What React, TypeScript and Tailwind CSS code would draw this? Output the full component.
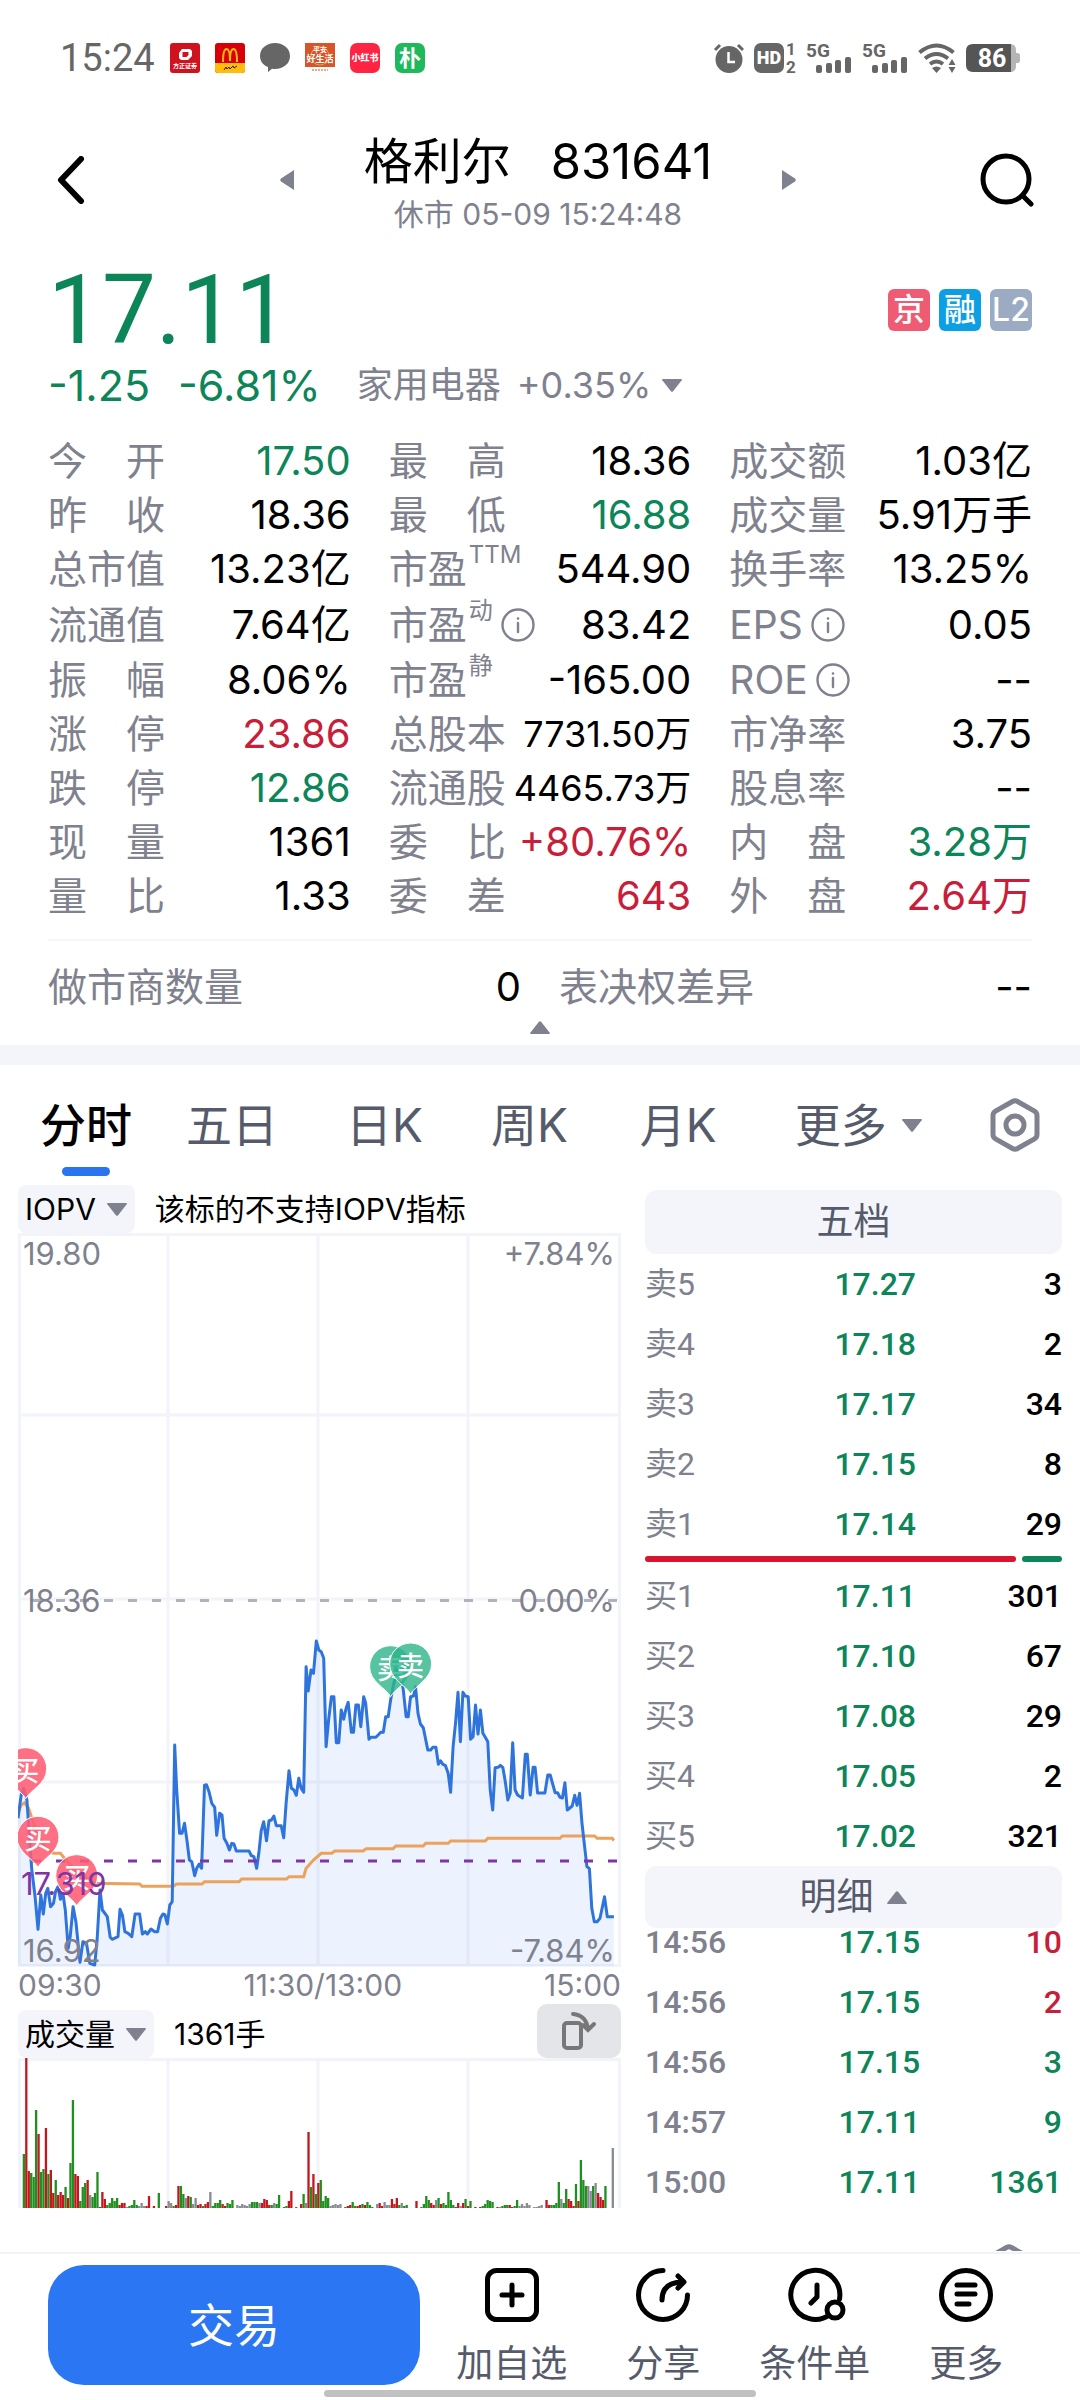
import React, { useState } from 'react';
import clsx from 'clsx';

type Tone = 'up' | 'down' | 'flat';

interface Stat {
  label: string;
  value: string;
  tone?: Tone;
  sup?: string;
  info?: boolean;
  small?: boolean;
}

const toneClass: Record<Tone, string> = {
  up: 'text-[#c81e3a]',
  down: 'text-[#0c8558]',
  flat: 'text-black',
};

const stats: Stat[] = [
  { label: '今　开', value: '17.50', tone: 'down' },
  { label: '最　高', value: '18.36' },
  { label: '成交额', value: '1.03亿' },
  { label: '昨　收', value: '18.36' },
  { label: '最　低', value: '16.88', tone: 'down' },
  { label: '成交量', value: '5.91万手' },
  { label: '总市值', value: '13.23亿' },
  { label: '市盈', sup: 'TTM', value: '544.90' },
  { label: '换手率', value: '13.25%' },
  { label: '流通值', value: '7.64亿' },
  { label: '市盈', sup: '动', info: true, value: '83.42' },
  { label: 'EPS', info: true, value: '0.05' },
  { label: '振　幅', value: '8.06%' },
  { label: '市盈', sup: '静', value: '-165.00' },
  { label: 'ROE', info: true, value: '--' },
  { label: '涨　停', value: '23.86', tone: 'up' },
  { label: '总股本', value: '7731.50万', small: true },
  { label: '市净率', value: '3.75' },
  { label: '跌　停', value: '12.86', tone: 'down' },
  { label: '流通股', value: '4465.73万', small: true },
  { label: '股息率', value: '--' },
  { label: '现　量', value: '1361' },
  { label: '委　比', value: '+80.76%', tone: 'up' },
  { label: '内　盘', value: '3.28万', tone: 'down' },
  { label: '量　比', value: '1.33' },
  { label: '委　差', value: '643', tone: 'up' },
  { label: '外　盘', value: '2.64万', tone: 'up' },
];

const tabs = [
  { name: '分时', gap: 'mr-[54px]' },
  { name: '五日', gap: 'mr-[68px]' },
  { name: '日K', gap: 'mr-[68px]' },
  { name: '周K', gap: 'mr-[72px]' },
  { name: '月K', gap: 'mr-[78px]' },
];

const asks = [
  ['卖5', '17.27', '3'],
  ['卖4', '17.18', '2'],
  ['卖3', '17.17', '34'],
  ['卖2', '17.15', '8'],
  ['卖1', '17.14', '29'],
];

const bids = [
  ['买1', '17.11', '301'],
  ['买2', '17.10', '67'],
  ['买3', '17.08', '29'],
  ['买4', '17.05', '2'],
  ['买5', '17.02', '321'],
];

const ticks: [string, string, string, Tone][] = [
  ['14:56', '17.15', '10', 'up'],
  ['14:56', '17.15', '2', 'up'],
  ['14:56', '17.15', '3', 'down'],
  ['14:57', '17.11', '9', 'down'],
  ['15:00', '17.11', '1361', 'down'],
];

// raw x,y samples of the price and average lines
const PRICE =
  '44,775 52,705 58,685 66,720 72,830 78,930 86,1010 93,1108 100,1005 106,1062 112,1000 117,985 124,1040 131,1030 136,995 142,980 148,1018 154,1000 160,1050 167,1165 172,1130 179,1040 186,1085 196,1207 203,1145 212,1150 220,1210 232,1215 238,1140 245,990 251,1050 263,1070 270,1132 275,1138 289,1130 294,1048 300,1065 306,1115 314,1120 323,1130 331,1062 342,1062 349,1122 356,1115 361,1122 370,1107 379,1115 386,1115 393,1075 399,1062 404,1064 410,1092 416,1035 422,1025 428,555 433,690 440,820 446,820 452,790 458,840 464,900 470,905 477,947 482,925 488,912 494,925 501,676 506,674 512,695 519,730 526,742 531,826 538,760 544,765 549,835 556,850 562,870 568,850 573,852 579,873 610,873 616,887 622,890 629,925 634,880 640,812 646,785 653,842 659,782 665,780 671,768 677,797 689,797 695,833 701,730 708,632 714,685 720,690 726,706 732,655 738,685 744,697 750,320 755,393 762,330 768,340 775,243 781,270 787,275 793,295 799,560 805,480 812,410 818,410 824,548 830,548 836,450 842,478 848,445 853,427 861,517 866,517 872,435 878,435 884,500 891,410 896,430 904,538 909,532 921,532 933,517 939,517 945,470 951,470 957,420 963,380 972,330 980,330 988,390 995,470 1000,470 1006,410 1013,408 1018,380 1024,460 1030,492 1037,503 1048,570 1055,570 1060,562 1068,562 1074,613 1079,602 1085,613 1091,616 1098,640 1104,697 1110,560 1116,490 1122,397 1128,545 1134,397 1140,408 1147,410 1153,538 1159,530 1165,435 1171,522 1177,450 1183,520 1189,532 1195,545 1201,690 1207,750 1213,623 1220,622 1226,616 1232,623 1238,665 1244,720 1250,700 1256,548 1262,690 1268,705 1280,714 1287,583 1292,583 1299,705 1306,622 1311,622 1317,699 1335,699 1342,645 1348,645 1354,672 1360,698 1366,698 1372,712 1378,714 1384,668 1390,750 1402,738 1408,706 1414,736 1420,700 1426,790 1438,920 1444,926 1450,1045 1456,1085 1463,1085 1470,1075 1481,1010 1488,1070 1504,1070';
const AVERAGE =
  '44,760 52,735 60,728 70,745 82,790 95,830 110,860 130,880 148,880 165,905 190,940 230,970 342,972 348,979 425,979 432,972 495,972 501,965 586,965 592,957 702,957 708,950 744,950 750,925 768,900 787,880 813,880 820,873 890,873 897,866 963,866 970,858 1037,858 1043,850 1098,850 1104,843 1189,843 1195,835 1372,835 1378,828 1457,828 1463,835 1500,835 1504,842';

// one bar per minute: r = up, g = down, k = unchanged
const VOLUME =
  'g54 r150 r37 g35 g31 g98 r74 g36 g39 r80 g34 r38 r15 g28 r13 r16 r13 g21 r10 g45 g108 r34 r32 g7 g21 g25 r28 k13 g11 g15 g36 r1 r16 r9 g3 g5 g10 g7 g10 r3 r5 r5 k1 g2 g3 g8 g3 k2 k5 k2 r2 r12 k0 r2 k0 g15 k0 k0 r2 k7 k5 g2 r3 r22 g22 g14 k10 r12 g11 k4 k10 r3 r4 g2 r4 r6 k16 g2 g5 g5 g8 r4 r2 g5 g4 g8 k0 k3 k2 k4 k3 k2 k4 g6 g6 g6 k5 r5 r9 r8 r3 g3 k5 g4 g13 k0 g1 g2 r7 r17 k0 g1 k0 r4 g14 k5 r76 g21 r34 g14 r25 g28 g7 g12 g10 k2 k3 k4 k3 k4 k0 g1 r2 r3 g6 g2 r2 r3 g4 r3 g6 g3 g1 k0 k4 r5 r2 k6 k3 k3 r9 r4 r10 g3 k5 g2 g3 k0 k0 k0 r7 k0 g1 g4 g12 g8 r5 r3 k8 g10 r4 g5 g3 g16 g8 g3 r1 r5 k2 r5 g9 r2 g7 k0 r1 k0 r1 g2 g4 g8 g7 g6 k0 r1 k1 g2 g3 g3 r3 r1 g2 g8 k2 k4 k2 k5 k3 k0 k1 k1 k2 k3 k0 r8 r3 g3 g3 g5 g26 k9 g5 g19 r9 r7 r2 g24 r7 g48 g28 g22 k22 k17 g22 k25 r15 r11 r8 g22 k0 k0 k60';

const barColor: Record<string, string> = { r: '#c4161c', g: '#1f8f1f', k: '#888b94' };

const px = (x: number) => x / 2.45 - 18;
const py = (y: number) => y / 3 + 327;

const toPath = (samples: string) =>
  samples
    .split(' ')
    .map((pair, i) => {
      const [x, y] = pair.split(',').map(Number);
      return `${i === 0 ? 'M' : 'L'}${px(x).toFixed(1)} ${py(y).toFixed(1)}`;
    })
    .join('');

const Triangle = ({ up = false, className = '' }: { up?: boolean; className?: string }) => (
  <svg viewBox="0 0 22 15" className={clsx('w-[22px] h-[15px] shrink-0', up && 'rotate-180', className)}>
    <path d="M2 1h18q1.500 0 .7 1.200l-8.600 11q-1.100 1.300-2.200 0l-8.600-11Q.500 1 2 1z" fill="#7f828e" />
  </svg>
);

const InfoIcon = ({ className = '' }: { className?: string }) => (
  <svg viewBox="0 0 34 34" className={clsx('w-[34px] h-[34px] shrink-0', className)} fill="none" stroke="#7f828e" strokeWidth="2.400">
    <circle cx="17" cy="17" r="15.500" />
    <path d="M17 15v9" strokeLinecap="round" />
    <circle cx="17" cy="10.500" r="1.300" fill="#7f828e" stroke="none" />
  </svg>
);

const HexIcon = ({ className = '' }: { className?: string }) => (
  <svg viewBox="0 0 50 54" className={clsx('w-[50px] h-[54px] shrink-0', className)} fill="none" stroke="#7f828e" strokeWidth="5">
    <path d="M22.500 3.500q2.500-1.400 5 0l17 9.700q2.500 1.500 2.500 4.300v19q0 2.800-2.500 4.300l-17 9.700q-2.500 1.400-5 0l-17-9.700Q3 39.300 3 36.500v-19q0-2.800 2.500-4.300z" />
    <circle cx="25" cy="27" r="9" />
  </svg>
);

const StatusBar = () => (
  <div className="flex items-center justify-between h-[116px] px-[60px] text-[#666] font-[Roboto,'Noto_Sans_CJK_SC',sans-serif]">
    <div className="flex items-center gap-[15px]">
      <span className="text-[38px] leading-[48px]">15:24</span>
      <svg viewBox="0 0 30 30" className="w-[30px] h-[30px]">
        <rect width="30" height="30" rx="3" fill="#d0121f" />
        <path d="M12 6h8l2 2v5l-4 4h-7l-2-2v-5zM12.500 9v5h4l2-2V9z" fill="#fff" fillRule="evenodd" />
        <text x="15" y="25" fontSize="6" fontWeight="700" textAnchor="middle" fill="#fff">方正证券</text>
      </svg>
      <svg viewBox="0 0 30 30" className="w-[30px] h-[30px]">
        <rect width="30" height="30" rx="3" fill="#d80007" />
        <path d="M0 20h30v7q0 3-3 3H3q-3 0-3-3z" fill="#ffbc0d" />
        <path d="M8 19C8 10 9 6 11.500 6S15 11 15 18c0-7 1-12 3.500-12S22 10 22 19" fill="none" stroke="#ffbc0d" strokeWidth="2" />
        <path d="M9 27l2-3 1 2 2-2 1 2 3-3 1 2 3-2" fill="none" stroke="#222" />
      </svg>
      <svg viewBox="0 0 30 30" className="w-[30px] h-[30px]">
        <path d="M15 0c8.500 0 15 5.500 15 13s-6.500 13-15 13q-1.500 0-3-.3L8 29v-5C3 22 0 18 0 13 0 5.500 6.500 0 15 0z" fill="#666" />
      </svg>
      <svg viewBox="0 0 30 30" className="w-[30px] h-[30px]">
        <rect width="30" height="24" fill="#d8552b" />
        <circle cx="15" cy="13" r="9" fill="none" stroke="#f0a040" />
        <text x="15" y="9" fontSize="7" fontWeight="700" textAnchor="middle" fill="#fff">平安</text>
        <text x="15" y="19" fontSize="9" fontWeight="700" textAnchor="middle" fill="#fff">好生活</text>
        <path d="M7 27h16" stroke="#d8552b" strokeDasharray="2 1" />
      </svg>
      <svg viewBox="0 0 30 30" className="w-[30px] h-[30px]">
        <rect width="30" height="30" rx="7" fill="#ff2442" />
        <text x="15" y="18" fontSize="9" fontWeight="900" textAnchor="middle" fill="#fff">小红书</text>
      </svg>
      <svg viewBox="0 0 30 30" className="w-[30px] h-[30px]">
        <rect width="30" height="30" rx="7" fill="#1fb85c" />
        <text x="15" y="23" fontSize="22" fontWeight="700" textAnchor="middle" fill="#fff">朴</text>
      </svg>
    </div>

    <div className="flex items-center gap-[10px]">
      <svg viewBox="0 0 30 30" className="w-[30px] h-[30px]">
        <circle cx="15" cy="16.500" r="13.500" fill="#666" />
        <path d="M1 7l5-5M29 7l-5-5" stroke="#666" strokeWidth="3" />
        <path d="M14.500 9v10H21" fill="none" stroke="#fff" strokeWidth="2.500" />
      </svg>
      <svg viewBox="0 0 42 30" className="w-[42px] h-[30px] overflow-visible">
        <rect width="30" height="30" rx="7" fill="#666" />
        <text x="15" y="21" fontSize="18" fontWeight="900" textAnchor="middle" fill="#fff">HD</text>
        <text x="37" y="12" fontSize="17" fontWeight="700" textAnchor="middle" fill="#666">1</text>
        <text x="37" y="30" fontSize="17" fontWeight="700" textAnchor="middle" fill="#666">2</text>
      </svg>
      {[0, 1].map((sim) => (
        <svg key={sim} viewBox="0 0 46 30" className="w-[46px] h-[30px] overflow-visible" fill="#666">
          <text x="0" y="14" fontSize="19" fontWeight="700">5G</text>
          <rect x="10" y="22" width="6" height="8" rx="2" />
          <rect x="20" y="20" width="6" height="10" rx="2" />
          <rect x="29" y="17" width="6" height="13" rx="2" />
          <rect x="39" y="14" width="6" height="16" rx="2" />
        </svg>
      ))}
      <svg viewBox="0 0 38 30" className="w-[38px] h-[30px]">
        <path d="M1.500 9.500q17-14 34 0M7 15.500q11.500-9 23 0M12 21q6.500-5 13 0" fill="none" stroke="#666" strokeWidth="4" />
        <path d="M14 25q4.500-3 9 0l-4.500 5zM34 16l3.500 6h-7zM34 30l-3.500-6h7z" fill="#666" />
      </svg>
      <svg viewBox="0 0 54 28" className="w-[54px] h-[28px]">
        <path d="M40 0h4q6 0 6 6v3h1.500q2.500 0 2.500 2.500v5q0 2.500-2.500 2.500H50v3q0 6-6 6h-4z" fill="#b5b5b5" />
        <path d="M7 0h38v28H7q-7 0-7-7V7q0-7 7-7z" fill="#555" />
        <text x="26" y="23" fontSize="25" fontWeight="700" textAnchor="middle" fill="#fff">86</text>
      </svg>
    </div>
  </div>
);

const Header = () => (
  <header className="flex items-start justify-between pt-4 px-[46px]">
    <button aria-label="返回" className="h-24 w-[50px] flex items-center justify-center">
      <svg viewBox="0 0 28 48" className="w-[28px] h-[48px]" fill="none" stroke="#000" strokeWidth="6" strokeLinecap="round" strokeLinejoin="round">
        <path d="M24 3L4 24 24 45" />
      </svg>
    </button>
    <div className="flex items-start gap-[70px]">
      <button aria-label="上一只" className="h-24">
        <svg viewBox="0 0 14 20" className="w-[14px] h-[20px]"><path d="M14 0v20L1 11.500q-1.500-1.500 0-3z" fill="#7f828e" /></svg>
      </button>
      <div className="text-center">
        <h1 className="text-[49px] leading-[60px] whitespace-nowrap">格利尔<span className="ml-[40px]">831641</span></h1>
        <p className="text-[30px] leading-[44px] text-[#7f828e]">休市 05-09 15:24:48</p>
      </div>
      <button aria-label="下一只" className="h-24">
        <svg viewBox="0 0 14 20" className="w-[14px] h-[20px]"><path d="M0 0v20L13 11.500q1.500-1.500 0-3z" fill="#7f828e" /></svg>
      </button>
    </div>
    <button aria-label="搜索" className="h-24 flex items-center">
      <svg viewBox="0 0 54 54" className="w-[54px] h-[54px]" fill="none" stroke="#000" strokeWidth="5" strokeLinecap="round">
        <circle cx="26" cy="26" r="23" />
        <path d="M43 43l8 8" />
      </svg>
    </button>
  </header>
);

const StatCell = ({ stat, tall }: { stat: Stat; tall: boolean }) => (
  <div className={clsx('flex items-center justify-between whitespace-nowrap', tall ? 'h-[57px]' : 'h-[54px]')}>
    <dt className="flex items-center text-[39px] leading-[54px] text-[#7f828e]">
      {stat.label}
      {stat.sup && <sup className="self-start ml-[2px] mr-2 top-0 text-[24px] leading-[26px]">{stat.sup}</sup>}
      {stat.info && <InfoIcon className={stat.sup ? '' : 'ml-2'} />}
    </dt>
    <dd className={clsx('leading-[54px]', stat.small ? 'text-[36px]' : 'text-[40px]', toneClass[stat.tone ?? 'flat'])}>
      {stat.value}
    </dd>
  </div>
);

const Pin = ({ x, y, side }: { x: number; y: number; side: 'buy' | 'sell' }) => (
  <g transform={`translate(${px(x)} ${py(y)})`}>
    <path
      d="M0 0C-5-9-21-15-21-30A21 21 0 0 1 21-30C21-15 5-9 0 0z"
      fill={side === 'buy' ? '#ff5c73' : '#2db48a'}
      fillOpacity={side === 'buy' ? 0.88 : 0.8}
      stroke="#fff"
    />
    <text y="-18" fontSize="27" fontWeight="500" textAnchor="middle" fill="#fff">{side === 'buy' ? '买' : '卖'}</text>
  </g>
);

const PriceChart = () => {
  const line = toPath(PRICE);
  return (
    <svg viewBox="0 0 603 734" className="block w-full" fontSize="31">
      <g stroke="#f3f4f9" strokeWidth="3" fill="none">
        <rect x="1.500" y="1.500" width="600" height="731" />
        <path d="M150 0v734M300 0v734M450 0v734M0 182h603M0 366h603M0 549h603" />
      </g>
      <path d="M14 367.500h589" stroke="#b0b3bd" strokeWidth="3" strokeDasharray="9 15" />
      <path d={`${line}V733H0z`} fill="#2b74f0" fillOpacity="0.09" />
      <path d={toPath(AVERAGE)} fill="none" stroke="#eba25c" strokeWidth="3" />
      <path d={line} fill="none" stroke="#2f74dc" strokeWidth="3" strokeLinejoin="round" />
      <path d="M14 628h589" stroke="#7f35a5" strokeWidth="3" strokeDasharray="9 15" />
      <Pin x={63} y={716} side="buy" />
      <Pin x={93} y={922} side="buy" />
      <Pin x={188} y={1037} side="buy" />
      <Pin x={957} y={410} side="sell" />
      <Pin x={1006} y={402} side="sell" />
      <g fill="#7f828e">
        <text x="5" y="32">19.80</text>
        <text x="5" y="379">18.36</text>
        <text x="5" y="729">16.92</text>
        <text x="597" y="32" textAnchor="end">+7.84%</text>
        <text x="597" y="379" textAnchor="end">0.00%</text>
        <text x="597" y="729" textAnchor="end">-7.84%</text>
      </g>
      <text x="3" y="662" fill="#7f35a5">17.319</text>
    </svg>
  );
};

const VolumeChart = () => (
  <svg viewBox="0 0 603 150" className="block w-full">
    <path d="M0 1.500h603M1.500 0v150M150 0v150M300 0v150M450 0v150M601.500 0v150" stroke="#f3f4f9" strokeWidth="3" fill="none" />
    {VOLUME.split(' ').map((bar, i) => {
      const h = Number(bar.slice(1));
      return <rect key={i} x={4.700 + i * 2.454} y={150 - h} width="2.300" height={h} fill={barColor[bar[0]]} />;
    })}
  </svg>
);

const BookTable = ({ rows, label }: { rows: string[][]; label: string }) => (
  <table aria-label={label} className="w-full table-fixed font-[Roboto,'Noto_Sans_CJK_SC',sans-serif]">
    <tbody>
      {rows.map(([name, price, volume]) => (
        <tr key={name} className="h-[60px] leading-[60px] text-[32px] font-medium">
          <th scope="row" className="w-[32%] p-0 text-left text-[32px] font-normal text-[#7f828e]">{name}</th>
          <td className="w-[33%] p-0 text-right text-[#0c8558]">{price}</td>
          <td className="w-[35%] p-0 text-right">{volume}</td>
        </tr>
      ))}
    </tbody>
  </table>
);

const actions = [
  {
    name: '加自选',
    icon: (
      <>
        <rect x="2.500" y="2.500" width="49" height="49" rx="9" />
        <path d="M27 17v20M17 27h20" />
      </>
    ),
  },
  {
    name: '分享',
    icon: (
      <>
        <path d="M27 2.500A24.500 24.500 0 1 0 51.500 27" />
        <path d="M26 32C26 20 33 14 47 14M42 8l6 6-6 6" />
      </>
    ),
  },
  {
    name: '条件单',
    icon: (
      <>
        <path d="M42 46.500A24.500 24.500 0 1 1 51.500 31" />
        <path d="M29 17v12l-6 6" />
        <circle cx="47" cy="42" r="8" fill="#fff" />
      </>
    ),
  },
  {
    name: '更多',
    icon: (
      <>
        <circle cx="27" cy="27" r="24.500" />
        <path d="M18 17h18M18 26h18M18 36h12" />
      </>
    ),
  },
];

const App = () => {
  const [activeTab, setActiveTab] = useState('分时');

  return (
    <div className="min-h-screen flex flex-col bg-white text-black font-[Inter,'Noto_Sans_CJK_SC',sans-serif]">
      <StatusBar />
      <Header />

      {/* Quote */}
      <section className="px-12">
        <div className="flex items-center justify-between pt-[14px]">
          <div className="text-[96px] leading-[120px] text-[#0c8558] font-[Roboto,sans-serif]">17.11</div>
          <div className="flex gap-[9px] text-[32px] leading-[42px] text-white text-center font-medium">
            <span className="w-[42px] h-[42px] rounded-md bg-[#ee5b73]">京</span>
            <span className="w-[42px] h-[42px] rounded-md bg-[#0d9fe3]">融</span>
            <span className="w-[42px] h-[42px] rounded-md bg-[#9aabc3]">L2</span>
          </div>
        </div>
        <div className="flex items-center h-[30px] leading-[30px] whitespace-nowrap text-[#7f828e] text-[36px]">
          <span className="text-[43px] text-[#0c8558]">-1.25</span>
          <span className="ml-[28px] text-[43px] text-[#0c8558]">-6.81%</span>
          <button className="ml-9 flex items-center">
            家用电器<span className="ml-4 mr-[10px]">+0.35%</span>
            <Triangle />
          </button>
        </div>

        <dl className="grid grid-cols-3 gap-x-[38px] pt-[34px]">
          {stats.map((stat, i) => (
            <StatCell key={i} stat={stat} tall={i >= 9 && i < 12} />
          ))}
        </dl>

        <dl className="mt-4 grid grid-cols-2 gap-x-[38px] border-t-2 border-[#f6f6f8] pt-[19px]">
          <StatCell stat={{ label: '做市商数量', value: '0' }} tall={false} />
          <StatCell stat={{ label: '表决权差异', value: '--' }} tall={false} />
        </dl>
        <button aria-label="收起" className="flex justify-center w-full pt-[6px] pb-[10px]">
          <Triangle up />
        </button>
      </section>

      <div className="h-5 bg-[#f4f5fa]" />

      {/* Period tabs */}
      <nav className="flex items-center h-[120px] px-10 text-[46px] leading-[60px] text-[#565b6b] whitespace-nowrap">
        {tabs.map((tab) => {
          const active = tab.name === activeTab;
          return (
            <button
              key={tab.name}
              onClick={() => setActiveTab(tab.name)}
              className={clsx('relative', tab.gap, active && 'font-medium text-black')}
            >
              {tab.name}
              {active && <span className="absolute left-1/2 -translate-x-1/2 top-[72px] w-12 h-[9px] rounded-full bg-[#2b74f0]" />}
            </button>
          );
        })}
        <button className="flex items-center gap-[14px]">
          更多
          <Triangle />
        </button>
        <button aria-label="设置" className="ml-auto">
          <HexIcon />
        </button>
      </nav>

      <main className="flex gap-6 px-[18px]">
        <div className="flex-[603] min-w-0">
          <div className="flex items-center gap-5 text-[30px] leading-[48px] whitespace-nowrap">
            <button className="flex items-center gap-[10px] rounded-lg bg-[#f4f5fa] px-[7px]">
              IOPV
              <Triangle />
            </button>
            <span>该标的不支持IOPV指标</span>
          </div>
          <PriceChart />
          <div className="flex justify-between text-[30px] leading-[37px] text-[#7f828e]">
            <span>09:30</span>
            <span>11:30/13:00</span>
            <span>15:00</span>
          </div>
          <div className="flex items-end gap-5 text-[30px] leading-[48px] whitespace-nowrap">
            <button className="flex items-center gap-[10px] rounded-lg bg-[#f4f5fa] px-[7px]">
              成交量
              <Triangle />
            </button>
            <span>1361手</span>
            <button aria-label="横屏" className="ml-auto flex items-center justify-center w-[84px] h-[54px] rounded-[10px] bg-[#e4e5e9]">
              <svg viewBox="0 0 38 40" className="w-[38px] h-[40px]" fill="none" stroke="#777" strokeWidth="4" strokeLinecap="round">
                <rect x="4" y="12" width="17" height="25" rx="3" />
                <path d="M13 3q13 1 15 15M23 14l5 5 6-6" />
              </svg>
            </button>
          </div>
          <VolumeChart />
        </div>

        <div className="flex-[417] min-w-0 pt-[5px]">
          <button className="block w-full h-[64px] rounded-xl bg-[#f4f5fa] text-[37px] leading-[64px] text-[#565b6b]">五档</button>
          <BookTable rows={asks} label="卖盘" />
          <div className="flex gap-[6px] h-[12px] pt-[2px] pb-1">
            <div className="flex-[371] rounded-full bg-[#d8142f]" />
            <div className="flex-[40] rounded-full bg-[#0c8558]" />
          </div>
          <BookTable rows={bids} label="买盘" />
          <button className="flex items-center justify-center gap-3 w-full h-[62px] rounded-xl bg-[#f4f5fa] text-[37px] text-[#565b6b]">
            明细
            <Triangle up />
          </button>
          <div className="overflow-hidden">
            <table aria-label="明细" className="-mt-4 w-full table-fixed font-[Roboto,'Noto_Sans_CJK_SC',sans-serif]">
              <tbody>
                {ticks.map(([time, price, volume, tone], i) => (
                  <tr key={i} className="h-[60px] leading-[60px] text-[32px] font-medium">
                    <td className="w-[32%] p-0 text-[#7f828e]">{time}</td>
                    <td className="w-[34%] p-0 text-right text-[#0c8558]">{price}</td>
                    <td className={clsx('w-[34%] p-0 text-right', toneClass[tone])}>{volume}</td>
                  </tr>
                ))}
              </tbody>
            </table>
          </div>
        </div>
      </main>

      {/* next panel, mostly scrolled under the bottom bar */}
      <div className="flex-1 pt-8 px-[46px]">
        <div className="flex justify-end h-[7px] overflow-hidden">
          <HexIcon />
        </div>
      </div>

      <footer className="sticky bottom-0 border-t-2 border-[#f2f3f5] bg-white pt-[11px]">
        <div className="flex items-start pl-12 pr-[38px]">
          <button className="w-[372px] h-[120px] rounded-[36px] bg-[#2b76f2] text-[46px] text-white">交易</button>
          <div className="flex-1 grid grid-cols-4 pl-[16px]">
            {actions.map((action) => (
              <button key={action.name} className="flex flex-col items-center pt-[3px] text-[37px] leading-[44px] text-[#565b6b] whitespace-nowrap">
                <svg viewBox="0 0 54 54" className="w-[54px] h-[54px] mb-5 overflow-visible" fill="none" stroke="#000" strokeWidth="5" strokeLinecap="round" strokeLinejoin="round">
                  {action.icon}
                </svg>
                {action.name}
              </button>
            ))}
          </div>
        </div>
        <div className="mx-auto mt-1 mb-[3px] h-[7px] w-2/5 rounded-full bg-[#c1c1c1]" />
      </footer>
    </div>
  );
};

export default App;
